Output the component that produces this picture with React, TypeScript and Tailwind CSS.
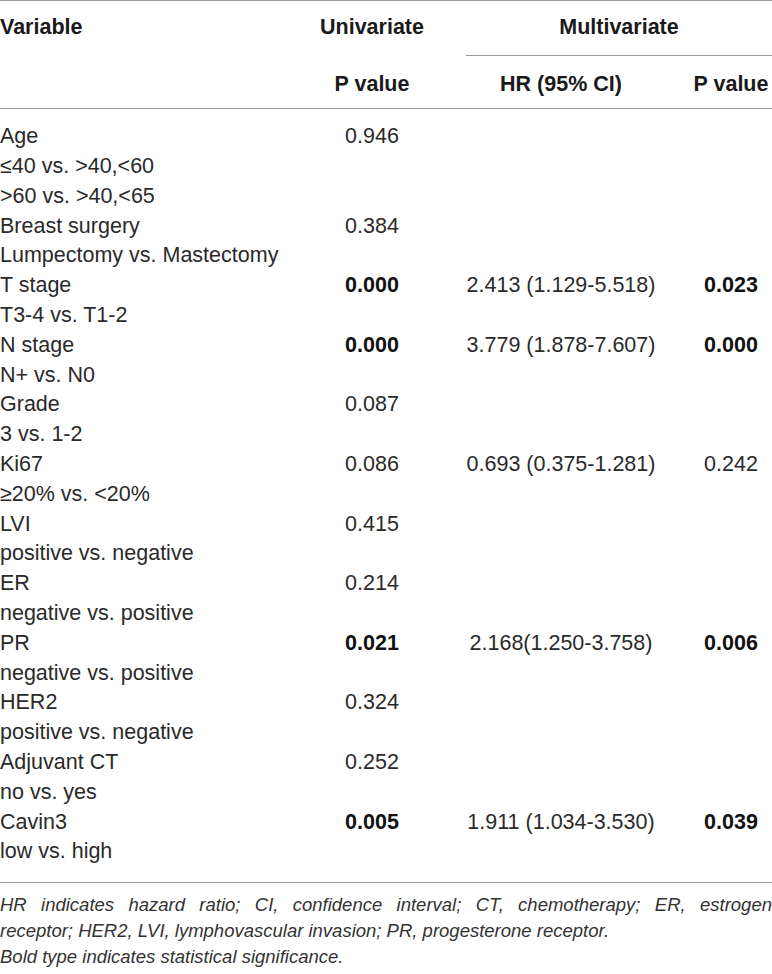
import React from 'react';

interface Row {
  label: string;
  uni?: string;
  uniBold?: boolean;
  hr?: string;
  p?: string;
  pBold?: boolean;
}

const ROWS: Row[] = [
  { label: 'Age', uni: '0.946' },
  { label: '≤40 vs. >40,<60' },
  { label: '>60 vs. >40,<65' },
  { label: 'Breast surgery', uni: '0.384' },
  { label: 'Lumpectomy vs. Mastectomy' },
  { label: 'T stage', uni: '0.000', uniBold: true, hr: '2.413 (1.129-5.518)', p: '0.023', pBold: true },
  { label: 'T3-4 vs. T1-2' },
  { label: 'N stage', uni: '0.000', uniBold: true, hr: '3.779 (1.878-7.607)', p: '0.000', pBold: true },
  { label: 'N+ vs. N0' },
  { label: 'Grade', uni: '0.087' },
  { label: '3 vs. 1-2' },
  { label: 'Ki67', uni: '0.086', hr: '0.693 (0.375-1.281)', p: '0.242' },
  { label: '≥20% vs. <20%' },
  { label: 'LVI', uni: '0.415' },
  { label: 'positive vs. negative' },
  { label: 'ER', uni: '0.214' },
  { label: 'negative vs. positive' },
  { label: 'PR', uni: '0.021', uniBold: true, hr: '2.168(1.250-3.758)', p: '0.006', pBold: true },
  { label: 'negative vs. positive' },
  { label: 'HER2', uni: '0.324' },
  { label: 'positive vs. negative' },
  { label: 'Adjuvant CT', uni: '0.252' },
  { label: 'no vs. yes' },
  { label: 'Cavin3', uni: '0.005', uniBold: true, hr: '1.911 (1.034-3.530)', p: '0.039', pBold: true },
  { label: 'low vs. high' },
];

const COLS = 'grid grid-cols-[312px_120px_258px_82px]';

const App: React.FC = () => {
  return (
    <div className="w-[772px] bg-white text-[#2a2a2a] font-['Liberation_Sans',Arial,sans-serif] text-[21.5px] leading-[28.6px]">
      <div className="border-t border-[#9a9a9a]">
        {/* header */}
        <div className={`${COLS} font-bold text-[#1a1a1a]`}>
          <div className="pt-3 pb-[13px]">Variable</div>
          <div className="pt-3 pb-[13px] text-center">Univariate</div>
          <div className="col-span-2 ml-[34px] border-b border-[#9a9a9a] pt-3 pb-[13px] text-center">Multivariate</div>
        </div>
        <div className={`${COLS} font-bold text-[#1a1a1a]`}>
          <div />
          <div className="pt-[14px] pb-[10px] text-center">P value</div>
          <div className="pt-[14px] pb-[10px] text-center">HR (95% CI)</div>
          <div className="pt-[14px] pb-[10px] text-center">P value</div>
        </div>
      </div>

      {/* body */}
      <div className="border-t border-b border-[#9a9a9a] pt-[13px] pb-[15px] leading-[29.8px]">
        {ROWS.map((r, i) => (
          <div key={i} className={`${COLS} whitespace-nowrap`}>
            <div>{r.label}</div>
            <div className={`text-center ${r.uniBold ? 'font-bold text-[#111]' : ''}`}>{r.uni}</div>
            <div className="text-center">{r.hr}</div>
            <div className={`text-center ${r.pBold ? 'font-bold text-[#111]' : ''}`}>{r.p}</div>
          </div>
        ))}
      </div>

      {/* footnote */}
      <div className="pt-[9px] italic text-[18.5px] leading-[25.7px] text-[#333]">
        <div className="text-justify [text-align-last:justify]">
          HR indicates hazard ratio; CI, confidence interval; CT, chemotherapy; ER, estrogen
        </div>
        <div>receptor; HER2, LVI, lymphovascular invasion; PR, progesterone receptor.</div>
        <div>Bold type indicates statistical significance.</div>
      </div>
    </div>
  );
};

export default App;
